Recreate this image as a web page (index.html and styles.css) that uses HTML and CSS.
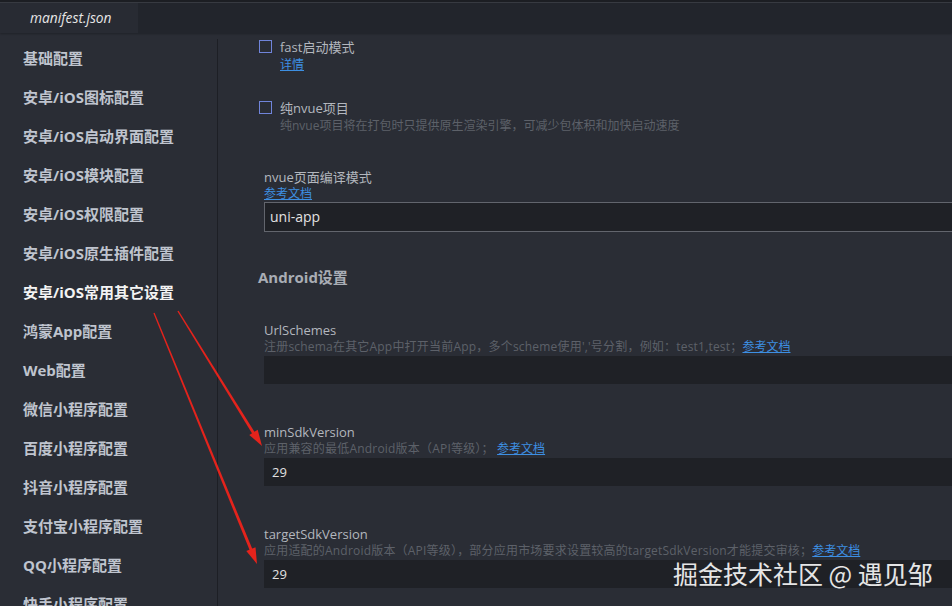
FILE: index.html
```html
<html><head>
<meta charset="UTF-8">
<meta name="viewport" content="width=device-width, initial-scale=1.0">
<title>manifest.json</title>
<link rel="stylesheet" href="styles.css">
</head>
<body>
  <div class="topline"></div>
  <div class="tabbar">
    <div class="tab">manifest.json</div>
  </div>

  <div class="main">
    <ul class="sidebar">
      <li>基础配置</li>
      <li>安卓/iOS图标配置</li>
      <li>安卓/iOS启动界面配置</li>
      <li>安卓/iOS模块配置</li>
      <li>安卓/iOS权限配置</li>
      <li>安卓/iOS原生插件配置</li>
      <li class="active">安卓/iOS常用其它设置</li>
      <li>鸿蒙App配置</li>
      <li>Web配置</li>
      <li>微信小程序配置</li>
      <li>百度小程序配置</li>
      <li>抖音小程序配置</li>
      <li>支付宝小程序配置</li>
      <li>QQ小程序配置</li>
      <li>快手小程序配置</li>
    </ul>

    <div class="content">
      <div class="check-item">
        <span class="checkbox"></span>
        <div class="check-text">
          <div class="label">fast启动模式</div>
          <a class="link">详情</a>
        </div>
      </div>

      <div class="check-item second">
        <span class="checkbox"></span>
        <div class="check-text">
          <div class="label">纯nvue项目</div>
          <div class="desc">纯nvue项目将在打包时只提供原生渲染引擎，可减少包体积和加快启动速度</div>
        </div>
      </div>

      <div class="field nvue">
        <div class="label">nvue页面编译模式</div>
        <div class="desc"><a class="link">参考文档</a></div>
        <div class="input bordered">uni-app</div>
      </div>

      <h3 class="section-title">Android设置</h3>

      <div class="field schemes">
        <div class="label">UrlSchemes</div>
        <div class="desc">注册schema在其它App中打开当前App，多个scheme使用','号分割，例如：test1,test；<a class="link">参考文档</a></div>
        <div class="input"></div>
      </div>

      <div class="field sdk">
        <div class="label">minSdkVersion</div>
        <div class="desc">应用兼容的最低Android版本（API等级）； <a class="link">参考文档</a></div>
        <div class="input num">29</div>
      </div>

      <div class="field sdk">
        <div class="label">targetSdkVersion</div>
        <div class="desc">应用适配的Android版本（API等级），部分应用市场要求设置较高的targetSdkVersion才能提交审核；<a class="link">参考文档</a></div>
        <div class="input num">29</div>
      </div>
    </div>
  </div>

  <!-- annotation arrows drawn over the page -->
  <svg class="arrows" width="952" height="606" viewBox="0 0 952 606">
    <polygon points="177.4,311.3 178.6,310.7 256.2,434.6 253.8,436.2" fill="#e4231c"/>
    <polygon points="262,446 249.3,435 257.7,429.8" fill="#e4231c"/>
    <polygon points="153.4,313.2 154.6,312.8 253.4,551.6 250.6,552.6" fill="#e4231c"/>
    <polygon points="257,564 246.3,551.1 255.5,547.3" fill="#e4231c"/>
  </svg>

  <div class="watermark">掘金技术社区 @ 遇见邹</div>
</body></html>
```

FILE: styles.css
```css
body {
  font-family: 'Open Sans', 'Noto Sans CJK SC', sans-serif;
  margin: 0;
  padding: 0;
  width: 952px;
  height: 606px;
  overflow: hidden;
  background-color: #2a2d35;
  color: #adb1b8;
  position: relative;
}
.topline {
  height: 2px;
  background-color: #1c1e23;
  border-bottom: 1px solid #383b43;
}
.tabbar {
  height: 30px;
  background-color: #22252c;
  display: flex;
  box-shadow: 0 1px 2px rgba(0,0,0,0.25);
}
.tab {
  width: 138px;
  background-color: #282b33;
  color: #e6e6e6;
  font-style: italic;
  font-size: 13.8px;
  line-height: 30px;
  padding-left: 30px;
  box-sizing: border-box;
}
.main {
  display: flex;
  height: 573px;
}
.sidebar {
  list-style-type: none;
  margin: 6px 0 0 0;
  padding: 0;
  width: 217px;
  flex-shrink: 0;
  border-right: 1px solid #1d1f25;
}
.sidebar li {
  height: 39px;
  line-height: 39px;
  padding-left: 23px;
  font-size: 15px;
  font-weight: bold;
  color: #bfc4ce;
  white-space: nowrap;
}
.sidebar li.active {
  color: #f3f3f3;
}
.content {
  flex-grow: 1;
  padding: 7px 0 0 40px;
  overflow: hidden;
}
.check-item {
  display: flex;
  margin-left: 1px;
}
.check-item.second {
  margin-top: 26px;
}
.checkbox {
  width: 11px;
  height: 11px;
  border: 1px solid #7084da;
  margin-right: 8px;
  flex-shrink: 0;
}
.label {
  font-size: 13px;
  line-height: 15px;
  color: #b3b7be;
  white-space: nowrap;
}
.check-item .link {
  display: block;
  font-size: 12px;
  line-height: 20px;
}
.desc {
  font-size: 12px;
  line-height: 20px;
  color: #5d6169;
  white-space: nowrap;
}
.link {
  color: #3d8fe2;
  text-decoration: underline;
  font-size: 12px;
  letter-spacing: 0;
}
.field {
  margin-left: 6px;
}
.field .label {
  line-height: 16px;
}
.field .desc {
  line-height: 18px;
  letter-spacing: 0.2px;
}
.field.nvue {
  margin-top: 33px;
}
.field.nvue .desc {
  line-height: 17px;
}
.field.schemes {
  margin-top: 35px;
}
.field.sdk {
  margin-top: 40px;
}
.input {
  height: 28px;
  line-height: 28px;
  background-color: #1f2126;
  margin-right: -6px;
  font-size: 14px;
  color: #e2e2e2;
  padding-left: 6px;
}
.input.bordered {
  border: 1px solid #62656d;
  padding-left: 5px;
}
.input.num {
  font-size: 13px;
  padding-left: 8px;
}
.section-title {
  margin: 35px 0 0 0;
  font-size: 15px;
  line-height: 20px;
  font-weight: bold;
  color: #a9adb5;
}
.arrows {
  position: absolute;
  left: 0;
  top: 0;
  pointer-events: none;
}
.watermark {
  position: absolute;
  left: 673px;
  top: 561px;
  font-family: 'Noto Sans CJK SC', sans-serif;
  font-size: 25px;
  line-height: 25px;
  color: #e6e6e6;
  white-space: nowrap;
}
```
